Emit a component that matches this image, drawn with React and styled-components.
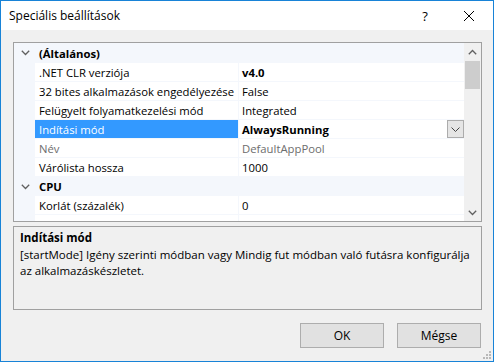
import React from "react";
import styled, { createGlobalStyle } from "styled-components";

const GlobalStyle = createGlobalStyle`
  html, body {
    margin: 0;
    padding: 0;
    background: #f0f0f0;
  }
  body {
    font-family: "Open Sans", "Noto Sans", sans-serif;
    font-size: 11.5px;
    color: #000;
  }
  * {
    box-sizing: border-box;
  }
`;

const rows = [
  { type: "cat", label: "(Általános)" },
  { name: ".NET CLR verziója", value: "v4.0", bold: true },
  { name: "32 bites alkalmazások engedélyezése", value: "False" },
  { name: "Felügyelt folyamatkezelési mód", value: "Integrated" },
  { name: "Indítási mód", value: "AlwaysRunning", bold: true, selected: true },
  { name: "Név", value: "DefaultAppPool", disabled: true },
  { name: "Várólista hossza", value: "1000" },
  { type: "cat", label: "CPU" },
  { name: "Korlát (százalék)", value: "0" },
  { name: "Korlátozási időtartam (perc)", value: "5" },
];

const Chevron = ({ up }) => (
  <svg width="9" height="6" viewBox="0 0 9 6">
    <path
      d={up ? "M0.8 5.2 L4.5 1.5 L8.2 5.2" : "M0.8 0.8 L4.5 4.5 L8.2 0.8"}
      fill="none"
      stroke="currentColor"
      strokeWidth="1.3"
    />
  </svg>
);

const App = () => {
  return (
    <Window>
      <GlobalStyle />
      <TitleBar>
        <Title>Speciális beállítások</Title>
        <TitleButtons>
          <HelpButton>?</HelpButton>
          <CloseButton>
            <svg width="10" height="10" viewBox="0 0 10 10">
              <path d="M0 0 L10 10 M10 0 L0 10" stroke="#000" strokeWidth="1" />
            </svg>
          </CloseButton>
        </TitleButtons>
      </TitleBar>

      <Body>
        <Grid>
          <Rows>
            {rows.map((r, i) =>
              r.type === "cat" ? (
                <CategoryRow key={i} $first={i === 0}>
                  <Margin>
                    <Chevron />
                  </Margin>
                  <CategoryLabel>{r.label}</CategoryLabel>
                </CategoryRow>
              ) : (
                <PropRow key={i}>
                  <Margin />
                  <NameCell $selected={r.selected} $disabled={r.disabled}>
                    {r.name}
                  </NameCell>
                  <Divider />
                  <ValueCell $bold={r.bold} $disabled={r.disabled}>
                    <span>{r.value}</span>
                    {r.selected && (
                      <DropButton>
                        <svg width="9" height="5" viewBox="0 0 9 5">
                          <path d="M0.5 0.5 L4.5 4.5 L8.5 0.5" fill="none" stroke="#444" strokeWidth="1" />
                        </svg>
                      </DropButton>
                    )}
                  </ValueCell>
                </PropRow>
              )
            )}
          </Rows>
          <ScrollBar>
            <ScrollArrow>
              <Chevron up />
            </ScrollArrow>
            <Thumb />
            <ScrollTrack />
            <ScrollArrow>
              <Chevron />
            </ScrollArrow>
          </ScrollBar>
        </Grid>

        <Description>
          <DescTitle>Indítási mód</DescTitle>
          <DescText>
            <span>[startMode] Igény szerinti módban vagy Mindig fut módban való futásra konfigurálja</span>
            <span>az alkalmazáskészletet.</span>
          </DescText>
        </Description>

        <ButtonBar>
          <DialogButton>OK</DialogButton>
          <DialogButton>Mégse</DialogButton>
        </ButtonBar>
      </Body>

      <Grip>
        <svg width="10" height="10" viewBox="0 0 10 10">
          <g fill="#b8b8b8">
            <rect x="7" y="1" width="2" height="2" />
            <rect x="4" y="4" width="2" height="2" />
            <rect x="7" y="4" width="2" height="2" />
            <rect x="1" y="7" width="2" height="2" />
            <rect x="4" y="7" width="2" height="2" />
            <rect x="7" y="7" width="2" height="2" />
          </g>
        </svg>
      </Grip>
    </Window>
  );
};

export default App;

const Window = styled.div`
  position: relative;
  width: 494px;
  height: 362px;
  border: 1px solid #1883d7;
  background: #f0f0f0;
  display: flex;
  flex-direction: column;
`;

const TitleBar = styled.div`
  height: 29px;
  background: #fff;
  display: flex;
  align-items: center;
  justify-content: space-between;
  padding-left: 8px;
`;

const Title = styled.div`
  font-size: 12px;
  margin-top: -1px;
`;

const TitleButtons = styled.div`
  display: flex;
  align-items: center;
  height: 100%;
`;

const HelpButton = styled.div`
  width: 46px;
  text-align: center;
  font-size: 13px;
  padding-left: 2px;
`;

const CloseButton = styled.div`
  width: 46px;
  height: 100%;
  display: flex;
  align-items: center;
  justify-content: center;
  padding-right: 2px;
`;

const Body = styled.div`
  flex: 1;
  display: flex;
  flex-direction: column;
  padding: 12px 11px 0 12px;
`;

const Grid = styled.div`
  height: 180px;
  border: 1px solid #a0a0a0;
  display: flex;
  background: #fff;
  font-size: 11.3px;
`;

const Rows = styled.div`
  flex: 1;
  overflow: hidden;
  display: flex;
  flex-direction: column;
`;

const CategoryRow = styled.div`
  flex: none;
  height: ${(p) => (p.$first ? "20px" : "19px")};
  background: #f4f7fc;
  display: flex;
  align-items: center;
`;

const Margin = styled.div`
  width: 21px;
  flex: none;
  align-self: stretch;
  background: #f4f7fc;
  display: flex;
  align-items: center;
  justify-content: center;
  color: #606060;
  padding-left: 1px;
`;

const CategoryLabel = styled.div`
  font-weight: 700;
  padding-left: 4px;
`;

const PropRow = styled.div`
  flex: none;
  height: 19px;
  display: flex;
  border-bottom: 1px solid #f4f7fc;
`;

const NameCell = styled.div`
  width: 203px;
  flex: none;
  padding-left: 4px;
  display: flex;
  align-items: center;
  white-space: nowrap;
  overflow: hidden;
  background: ${(p) => (p.$selected ? "#3399ff" : "#fff")};
  color: ${(p) => (p.$selected ? "#fff" : p.$disabled ? "#6d6d6d" : "#000")};
`;

const Divider = styled.div`
  width: 1px;
  flex: none;
  background: #f4f7fc;
`;

const ValueCell = styled.div`
  flex: 1;
  display: flex;
  align-items: center;
  justify-content: space-between;
  padding-left: 3px;
  white-space: nowrap;
  font-weight: ${(p) => (p.$bold ? 700 : 400)};
  color: ${(p) => (p.$disabled ? "#6d6d6d" : "#000")};
`;

const DropButton = styled.div`
  width: 17px;
  height: 18px;
  background: #e5e5e5;
  border: 1px solid #acacac;
  display: flex;
  align-items: center;
  justify-content: center;
`;

const ScrollBar = styled.div`
  width: 17px;
  flex: none;
  background: #f0f0f0;
  display: flex;
  flex-direction: column;
`;

const ScrollArrow = styled.div`
  height: 17px;
  display: flex;
  align-items: center;
  justify-content: center;
  color: #606060;
`;

const Thumb = styled.div`
  height: 28px;
  margin: 1px 1px 0 1px;
  background: #cdcdcd;
`;

const ScrollTrack = styled.div`
  flex: 1;
`;

const Description = styled.div`
  margin-top: 4px;
  height: 84px;
  border: 1px solid #a0a0a0;
  padding: 3px 6px;
`;

const DescTitle = styled.div`
  font-weight: 700;
  line-height: 16px;
`;

const DescText = styled.div`
  margin-top: 1px;
  display: flex;
  flex-direction: column;
  line-height: 16px;
  white-space: nowrap;
`;

const ButtonBar = styled.div`
  margin-top: 13px;
  display: flex;
  justify-content: flex-end;
  gap: 13px;
  padding-right: 1px;
`;

const DialogButton = styled.div`
  width: 84px;
  height: 25px;
  background: #e1e1e1;
  border: 1px solid #adadad;
  display: flex;
  align-items: center;
  justify-content: center;
  font-size: 12px;
`;

const Grip = styled.div`
  position: absolute;
  right: 1px;
  bottom: 1px;
  width: 10px;
  height: 10px;
  line-height: 0;
`;
